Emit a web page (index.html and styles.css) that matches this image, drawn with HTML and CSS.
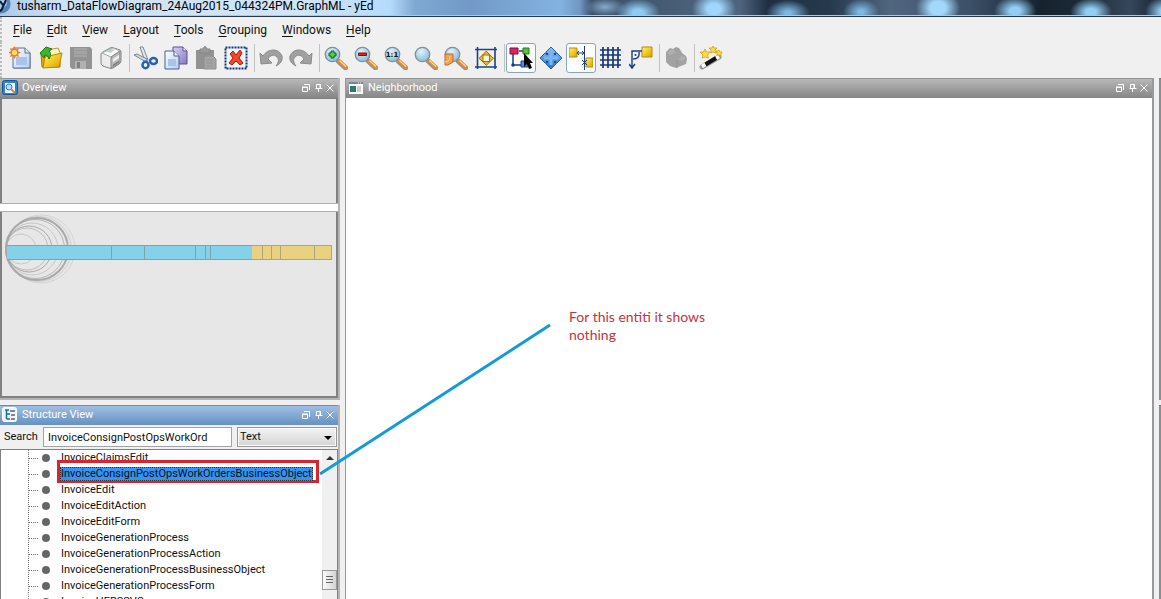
FILE: index.html
```html
<!DOCTYPE html>
<html lang="en">
<head>
<meta charset="utf-8">
<title>tusharm_DataFlowDiagram_24Aug2015_044324PM.GraphML - yEd</title>
<link rel="stylesheet" href="styles.css">
</head>
<body>
<svg class="defs" aria-hidden="true">
  <defs>
    <linearGradient id="g-yellow" x1="0" y1="0" x2="1" y2="1"><stop offset="0" stop-color="#fff08a"/><stop offset=".4" stop-color="#f8d22c"/><stop offset="1" stop-color="#d8a000"/></linearGradient>
    <linearGradient id="g-page" x1="0" y1="0" x2="1" y2="1"><stop offset="0" stop-color="#fff"/><stop offset="1" stop-color="#b4cdf2"/></linearGradient>
    <linearGradient id="g-purple" x1="0" y1="0" x2="1" y2="1"><stop offset="0" stop-color="#d9d2f5"/><stop offset="1" stop-color="#8577c4"/></linearGradient>
    <linearGradient id="g-blue" x1="0" y1="0" x2="0" y2="1"><stop offset="0" stop-color="#8cc4f8"/><stop offset="1" stop-color="#2a72c4"/></linearGradient>
    <radialGradient id="g-lens" cx=".4" cy=".3" r=".8"><stop offset="0" stop-color="#e2f3fb"/><stop offset="1" stop-color="#7fb4d4"/></radialGradient>
    <symbol id="lens" viewBox="0 0 24 24">
      <path d="M14.5 15.500l7 6.500" stroke="#9a938c" stroke-width="5" stroke-linecap="round"/>
      <path d="M15.500 15l6.500 6" stroke="#f08a24" stroke-width="3.500" stroke-linecap="round"/>
      <path d="M15.500 14.500l6.500 6" stroke="#ffd9a0" stroke-width="1.200"/>
      <circle cx="8.500" cy="8.500" r="7.200" fill="url(#g-lens)" stroke="#7e8e9a" stroke-width="1.300"/>
    </symbol>
    <symbol id="win-tools" viewBox="0 0 34 10">
      <g fill="none" stroke="#fff" stroke-width="1">
        <path d="M1.500 4.500h5v4h-5zM1 4h6M3 1.500h5.500v5.500"/>
        <path d="M14.500 5.500h7M15.500 5.500v-4h4v4M19 1.500v4M17.500 6v3"/>
        <path d="M25.500 1.500l7 7M32.500 1.500l-7 7"/>
      </g>
    </symbol>
  </defs>
</svg>

<header class="titlebar">
  <svg class="app-icon" viewBox="0 0 12 17" aria-hidden="true"><circle cx="1" cy="4" r="9.500" fill="#5686b8"/><circle cx="0" cy="2" r="7" fill="#a9c8e4"/><path d="M0 1l3 4M6 0l-4 9q-1 2-3 2" fill="none" stroke="#0b1c38" stroke-width="2"/></svg>
  <h1 class="title">tusharm_DataFlowDiagram_24Aug2015_044324PM.GraphML - yEd</h1>
</header>

<nav class="menubar" aria-label="Main menu">
  <button class="menu"><u>F</u>ile</button>
  <button class="menu"><u>E</u>dit</button>
  <button class="menu"><u>V</u>iew</button>
  <button class="menu"><u>L</u>ayout</button>
  <button class="menu"><u>T</u>ools</button>
  <button class="menu"><u>G</u>rouping</button>
  <button class="menu"><u>W</u>indows</button>
  <button class="menu"><u>H</u>elp</button>
</nav>

<div class="toolbar" role="toolbar" aria-label="Tools">
  <button class="tool" aria-label="New"><svg viewBox="0 0 24 24"><path d="M5 3h13l4 4v16H5z" fill="#777" opacity=".5"/><path d="M4 2h12l5 5v15H4z" fill="url(#g-page)" stroke="#58719c"/><path d="M16 2v5h5" fill="#dce8fa" stroke="#58719c"/><path d="M7 11h11v8H7z" fill="#a9c3ea"/><path d="M5.500 0l1.500 3 3-1-1 3 3 1.500-3 1.500 1 3-3-1-1.500 3-1.500-3-3 1 1-3-3-1.500 3-1.500-1-3 3 1z" fill="#f87838"/><circle cx="5.500" cy="6.500" r="2.600" fill="#ffe45a"/></svg></button>
  <button class="tool" aria-label="Open"><svg viewBox="0 0 24 24"><path d="M2 8l8-2 2 2h9v13H3z" fill="#d8a800" stroke="#a07c10"/><path d="M9 4l10-2 2 5v12L9 20z" fill="#fff8c0" stroke="#b59a30"/><path d="M6 11l17-4-3 14-16 1z" fill="url(#g-yellow)" stroke="#b18c10"/><path d="M1 7l6-6 6 2-3 2c2 2 2 5 0 8-1-3-2-4-4-4l-1 3z" fill="#3fb52d" stroke="#1c7a17"/></svg></button>
  <button class="tool" aria-label="Save" disabled><svg viewBox="0 0 24 24"><path d="M1 1h20l2 2v20H3l-2-2z" fill="#939393"/><path d="M5 2h13v9H5z" fill="#a4a4a4"/><path d="M6 15h11v8H6z" fill="#b2b2b2"/><path d="M8 16h3v6H8z" fill="#808080"/><path d="M5 4.500h13M5 8.500h13" stroke="#999"/></svg></button>
  <button class="tool" aria-label="Print"><svg viewBox="0 0 24 24"><path d="M2 8q0-1 2-2l7-4q2-1 4 0l6 2q1 1 1 2v9q0 2-2 3l-6 4q-2 1-4 0l-6-2q-2-1-2-3z" fill="#ececec" stroke="#868686"/><path d="M3 7l9 4 9-6-7-3z" fill="#fcfcfc" stroke="#aaa"/><path d="M12 11v11l9-5V5z" fill="#b9b9b9" stroke="#888"/><path d="M14 13l6-4v3l-6 4z" fill="#f4f4f4"/><path d="M14 19.500l6-4" stroke="#777" stroke-width="1.500"/><path d="M7 5l5-2 4 1-5 3z" fill="#bdd0c8"/></svg></button>
  <span class="sep"></span>
  <button class="tool" aria-label="Cut"><svg viewBox="0 0 24 24"><path d="M6 1l3 0 5 13-3 1z" fill="#e5e8ec" stroke="#7c8894"/><path d="M0 9l3-1 10 5-1 3z" fill="#d3d8dd" stroke="#7c8894"/><ellipse cx="11.500" cy="19" rx="3" ry="3.200" fill="none" stroke="#2162b4" stroke-width="2.500"/><ellipse cx="19.500" cy="15" rx="3.500" ry="3" fill="none" stroke="#2162b4" stroke-width="2.500"/></svg></button>
  <button class="tool" aria-label="Copy"><svg viewBox="0 0 24 24"><path d="M9 1h10l4 4v13H9z" fill="url(#g-purple)" stroke="#60519a"/><path d="M19 1v4h4" fill="#eee" stroke="#60519a"/><path d="M1 5h9l5 5v13H1z" fill="url(#g-page)" stroke="#436092"/><path d="M10 5v5h5" fill="#e9f2ff" stroke="#436092"/><path d="M4 13h8v7H4z" fill="#a8c4ea"/></svg></button>
  <button class="tool" aria-label="Paste" disabled><svg viewBox="0 0 24 24"><path d="M2 4h18v19H2z" fill="#929292"/><path d="M6 3h3q2-5 4 0h3v4H6z" fill="#999" stroke="#858585"/><path d="M10 10h9l3 3v10H10z" fill="#a4a4a4" stroke="#8e8e8e"/><path d="M12 14h7M12 17h7M12 20h7" stroke="#969696"/></svg></button>
  <button class="tool" aria-label="Delete"><svg viewBox="0 0 24 24"><path d="M1.500 1.500h21v21h-21z" fill="#f1f5fc" stroke="#143778" stroke-width="2" stroke-dasharray="2 1"/><path d="M6 8l3-3 3 4 4-5 2 3-3 5 4 5-3 2-4-4-4 4-3-2 4-5z" fill="#f04728" stroke="#a91c0c"/></svg></button>
  <span class="sep"></span>
  <button class="tool" aria-label="Undo" disabled><svg viewBox="0 0 24 24"><path d="M1 7l3 3C9 2 20 2 23 10c1 5-2 8-6 10 3-4 3-7 1-9-3-3-7-2-9 2l4 4-11 1z" fill="#a0a0a0" stroke="#8b8b8b"/></svg></button>
  <button class="tool" aria-label="Redo" disabled><svg viewBox="0 0 24 24"><path d="M23 7l-3 3C15 2 4 2 1 10c-1 5 2 8 6 10-3-4-3-7-1-9 3-3 7-2 9 2l-4 4 11 1z" fill="#a0a0a0" stroke="#8b8b8b"/></svg></button>
  <span class="sep"></span>
  <button class="tool" aria-label="Zoom in"><svg viewBox="0 0 24 24"><use href="#lens"/><path d="M7 5h3v2h2v3h-2v2H7v-2H5V7h2z" fill="#4bd044" stroke="#0c6410"/></svg></button>
  <button class="tool" aria-label="Zoom out"><svg viewBox="0 0 24 24"><use href="#lens"/><path d="M4.500 7h8v2.500h-8z" fill="#e32222" stroke="#82100f"/></svg></button>
  <button class="tool" aria-label="Zoom 1:1"><svg viewBox="0 0 24 24"><use href="#lens"/><text x="8" y="11" class="ratio">1:1</text></svg></button>
  <button class="tool" aria-label="Zoom"><svg viewBox="0 0 24 24"><use href="#lens"/></svg></button>
  <button class="tool" aria-label="Zoom to area"><svg viewBox="0 0 24 24"><use href="#lens"/><path d="M1 8h8v8l-5 3H1z" fill="#f3a25c" stroke="#c46a20"/><path d="M1 16q5 0 5-6" fill="none" stroke="#ffd5a8"/></svg></button>
  <button class="tool" aria-label="Fit content"><svg viewBox="0 0 24 24"><path d="M3.500 1v22M21 1v22M1 3.500h22M1 21h22" stroke="#1d4386" stroke-width="1.600"/><circle cx="12.300" cy="12.300" r="5.500" fill="none" stroke="#e8d48a"/><path d="M12.300 5l3.500 4h-7zM12.300 19.500l3.500-4h-7zM5 12.300l4-3.500v7zM19.500 12.300l-4-3.500v7z" fill="#f4bc18" stroke="#9a7408"/></svg></button>
  <span class="sep"></span>
  <button class="tool pressed" aria-label="Edit mode" aria-pressed="true"><svg viewBox="0 0 24 24"><path d="M4 8v11h8M10 5h6" stroke="#173f80" stroke-width="1.500" fill="none"/><path d="M1 2h8v6H1z" fill="#de2460" stroke="#7a1038"/><path d="M14 2h6v6h-6z" fill="#59c433" stroke="#297414"/><circle cx="4" cy="19" r="1.800" fill="#173f80"/><path d="M12 15h7v6h-7z" fill="#4d8fdd" stroke="#1d4386"/><path d="M15 7v14l3-3 2 5 3-1-2-5h3z" fill="#000"/></svg></button>
  <button class="tool" aria-label="Navigation mode"><svg viewBox="0 0 24 24"><path d="M12 1l5 5v1h1l5 5-5 5h-1v1l-5 5-5-5v-1H6l-5-5 5-5h1V6z" fill="url(#g-blue)" stroke="#2461a6"/><path d="M12 5v14M5 12h14" stroke="#7ab6ee" stroke-width="3"/><path d="M7 7h2v2H7zM15 7h2v2h-2zM7 15h2v2H7zM15 15h2v2h-2z" fill="#174e92"/></svg></button>
  <button class="tool pressed" aria-label="Snapping" aria-pressed="true"><svg viewBox="0 0 24 24"><path d="M0 2h8v9H0z" fill="url(#g-yellow)" stroke="#b18c10"/><path d="M17 12h7v9h-7z" fill="url(#g-yellow)" stroke="#b18c10"/><path d="M15.500 0v24M8 7h7M8 7l2-2M8 7l2 2M15 7l-2-2M15 7l-2 2M13 14l5 5M18 14l-5 5" stroke="#1d3f78" fill="none"/></svg></button>
  <button class="tool" aria-label="Grid"><svg viewBox="0 0 24 24"><path d="M4 1v21M9 1v21M14 1v21M19 1v21M1 4h21M1 9h21M1 14h21M1 19h21" stroke="#16387c" stroke-width="1.700"/></svg></button>
  <button class="tool" aria-label="Orthogonal edges"><svg viewBox="0 0 24 24"><path d="M13 1h10v10H13z" fill="url(#g-yellow)" stroke="#b18c10"/><path d="M13 5H3v17M0 18l3 4 3-4M4 13q7 0 6-7" fill="none" stroke="#173f80" stroke-width="1.400"/><circle cx="6.500" cy="9" r="1" fill="#173f80"/></svg></button>
  <span class="sep"></span>
  <button class="tool" aria-label="Component" disabled><svg viewBox="0 0 24 24"><path d="M2 6l4-4 3 1 3-2 3 1 2 3 1 2 4 3 1 3-1 5-5 2-5 2-6-2-4-4z" fill="#a2a2a2"/><path d="M3 7l5-4 4 3-6 3zM14 13l4-3 4 2-4 3z" fill="#b0b0b0"/><path d="M13 14v8" stroke="#909090"/></svg></button>
  <span class="sep"></span>
  <button class="tool" aria-label="Wizard"><svg viewBox="0 0 24 24"><path d="M3 21L20 11" stroke="#999" stroke-width="5" stroke-linecap="round"/><path d="M3 20.500l4-2.500M17 12.500l3-2" stroke="#fff" stroke-width="3.500"/><path d="M6.500 18.500l10.500-6.500" stroke="#111" stroke-width="4"/><path d="M6 3l1.500 3 4 0-3 3 1 3-3.500-1-3 1 1-3-3-3 3.500 0zM14 0l1 2 3 0-2 2 1 3-3-1-2 1 0-3-2-2 3 0zM20 4l1 2 2 0-1 2 0 2-2-1-2 0 0-2-1-2 2 0z" fill="#ffdc3c" stroke="#c99a10" stroke-width=".7"/></svg></button>
</div>

<main class="workspace">
  <div class="sidebar">
    <section class="panel overview">
      <div class="panel-head">
        <svg class="head-icon" viewBox="0 0 16 16"><rect x=".5" y=".5" width="15" height="14" rx="2" fill="#2e82ce" stroke="#14589c"/><path d="M3 3h10v10H3z" fill="#f0f6fc"/><circle cx="7" cy="7" r="3" fill="#b9dcf3" stroke="#427ca8"/><path d="M9 9l4 4" stroke="#d48834" stroke-width="2"/></svg>
        <h2>Overview</h2>
        <button class="win" aria-label="Overview window controls"><svg viewBox="0 0 34 10"><use href="#win-tools"/></svg></button>
      </div>
      <div class="overview-body">
        <div class="view-above"></div>
        <div class="view-strip"></div>
        <div class="view-graph">
          <svg viewBox="0 0 334 80" aria-label="Graph overview">
            <g fill="none" stroke="#777" opacity=".55">
              <circle cx="37" cy="37" r="32.500" opacity=".4"/><circle cx="39" cy="37" r="34" opacity=".3"/><circle cx="35" cy="37" r="31" stroke-width="2"/><circle cx="33" cy="37" r="29.500" opacity=".8"/>
              <circle cx="30" cy="37" r="26" opacity=".5"/><circle cx="27" cy="37" r="23"/><circle cx="25" cy="37" r="21" opacity=".7"/><circle cx="19" cy="37" r="15" opacity=".5"/>
            </g>
            <path d="M5 33h245v15H5z" fill="#83d2e7"/><path d="M250 33h80v15h-80z" fill="#e8d27f"/>
            <path d="M5 33.500h325M5 47.500h325M109.500 33v15M142.500 33v15M193.500 33v15M203.500 33v15M208.500 33v15M260.500 33v15M269.500 33v15M278.500 33v15M312.500 33v15M329.500 33v15" stroke="#777" opacity=".5"/>
          </svg>
        </div>
      </div>
    </section>

    <section class="panel structure">
      <div class="panel-head active">
        <svg class="head-icon" viewBox="0 0 16 16"><rect x=".5" y=".5" width="14" height="14" rx="2" fill="#eef5fc" stroke="#fff"/><path d="M3 3h4M4.500 3v9M4.500 7H8M4.500 12H8" stroke="#2067a8" stroke-width="1.500" fill="none"/><path d="M8 4h5M9 8h4M9 12h4" stroke="#7f8890" stroke-width="2"/></svg>
        <h2>Structure View</h2>
        <button class="win" aria-label="Structure View window controls"><svg viewBox="0 0 34 10"><use href="#win-tools"/></svg></button>
      </div>
      <form class="search">
        <label for="q">Search</label>
        <input id="q" type="text" value="InvoiceConsignPostOpsWorkOrd">
        <span class="combo"><select aria-label="Search in"><option>Text</option></select></span>
      </form>
      <div class="tree-wrap">
        <ul class="tree">
          <li><i class="dot"></i><span>InvoiceClaimsEdit</span></li>
          <li class="marked"><i class="dot"></i><span class="selected">InvoiceConsignPostOpsWorkOrdersBusinessObject</span></li>
          <li><i class="dot"></i><span>InvoiceEdit</span></li>
          <li><i class="dot"></i><span>InvoiceEditAction</span></li>
          <li><i class="dot"></i><span>InvoiceEditForm</span></li>
          <li><i class="dot"></i><span>InvoiceGenerationProcess</span></li>
          <li><i class="dot"></i><span>InvoiceGenerationProcessAction</span></li>
          <li><i class="dot"></i><span>InvoiceGenerationProcessBusinessObject</span></li>
          <li><i class="dot"></i><span>InvoiceGenerationProcessForm</span></li>
          <li><i class="dot"></i><span>InvoiceHERSSVC</span></li>
        </ul>
        <div class="scrollbar"><i class="up"></i><i class="thumb"></i></div>
      </div>
    </section>
  </div>

  <section class="panel neighborhood">
    <div class="panel-head">
      <svg class="head-icon" viewBox="0 0 16 16"><path d="M1 2h14v12H1z" fill="#fff"/><path d="M1 2h14v2H1z" fill="#6f8796"/><path d="M2 6h6v6H2z" fill="#2f7a74"/><path d="M9 7h4M9 9h4M9 11h4" stroke="#999"/><path d="M10 3h1M12 3h1" stroke="#fff"/></svg>
      <h2>Neighborhood</h2>
      <button class="win" aria-label="Neighborhood window controls"><svg viewBox="0 0 34 10"><use href="#win-tools"/></svg></button>
    </div>
    <div class="canvas"></div>
  </section>

  <div class="edge"><div class="edge-top"></div><div class="edge-bottom"></div></div>

  <svg class="pointer" viewBox="0 0 234 154" aria-hidden="true"><path d="M2 151L232 2" stroke="#149bd7" stroke-width="3"/></svg>
  <p class="note">For this entiti it shows<br>nothing</p>
</main>
</body>
</html>
```
FILE: styles.css
```css
*, *::before, *::after { box-sizing: border-box; }
html, body { height: 100%; }
body {
  margin: 0;
  display: flex;
  flex-direction: column;
  overflow: hidden;
  background: #f0f0f0;
  color: #111;
  font: 11px/16px Roboto, "Noto Sans", sans-serif;
}
button, input, select { font: inherit; color: inherit; }
button { padding: 0; border: 0; background: none; }
.defs { position: absolute; width: 0; height: 0; }

/* Title bar: translucent glass over a bokeh desktop */
.titlebar {
  flex: none;
  display: flex;
  height: 17px;
  gap: 5px;
  border-bottom: 1px solid #28394b;
  box-shadow: inset 0 -1px #b5c6d4;
  background:
    radial-gradient(ellipse 20px 9px at 605px 7px, #86a9cb, transparent),
    radial-gradient(ellipse 22px 14px at 638px 13px, #8fcaf2 25%, transparent),
    radial-gradient(ellipse 22px 18px at 714px 9px, #9fd6fc 30%, transparent),
    radial-gradient(ellipse 22px 13px at 788px 13px, #7db8e0 15%, transparent),
    radial-gradient(ellipse 18px 13px at 861px 12px, #7db8e0 15%, transparent),
    radial-gradient(ellipse 22px 19px at 938px 8px, #a2d8fc 35%, transparent),
    radial-gradient(ellipse 21px 15px at 1015px 11px, #90cef4 25%, transparent),
    radial-gradient(ellipse 21px 14px at 1091px 12px, #90cef4 25%, transparent),
    radial-gradient(ellipse 20px 16px at 1165px 12px, #90cef4 25%, transparent),
    linear-gradient(90deg, #a9c9e8 0, #cfe2f4 60px, #d2e5f6 300px, #b5dbfc 390px, #7fa8d2 415px, #7299c8 470px, #83b3e0 560px, #6f97c2 580px, #3b5169 592px, #4a6078 690px, #4f647e 740px, #1f2f42 768px, #26394d 830px, #50657f 890px, #3c5068 970px, #16232f 1040px, #1b2936 1080px, #36475c 1130px, #16232f 1161px);
}
.app-icon { flex: none; width: 12px; height: 17px; }
.title { margin: 0; font: 12px/13px Roboto, sans-serif; color: #000; white-space: nowrap; }

.menubar { flex: none; display: flex; align-items: center; height: 25px; padding-left: 3px; border-left: 2px dotted #bbb; }
.menu { padding: 0 8px; margin-right: -1px; font: 12px/18px Roboto, sans-serif; }
.menu u { text-underline-offset: 2px; }

.toolbar { flex: none; display: flex; align-items: center; height: 36px; padding: 0 0 4px 4px; border-left: 2px dotted #bbb; }
.tool { display: flex; align-items: center; justify-content: center; flex: none; width: 30px; height: 30px; }
.tool svg { width: 24px; height: 24px; }
.tool.pressed { border: 1px solid #8aa4b8; border-radius: 3px; background: #fafcfe; }
.ratio { font: bold 7px "DejaVu Sans", sans-serif; text-anchor: middle; fill: #111; }
.sep { flex: none; width: 1px; height: 28px; margin: 0 1px 0 3px; background: #c2c2c2; }

.workspace { position: relative; flex: 1; min-height: 0; display: grid; grid-template-columns: 340px minmax(0, 1fr) 2px; column-gap: 5px; }
.sidebar { display: grid; grid-template-rows: 322px minmax(0, 1fr); row-gap: 5px; min-height: 0; }
.panel { display: flex; flex-direction: column; min-width: 0; min-height: 0; }

.panel-head {
  flex: none;
  display: flex;
  align-items: center;
  gap: 4px;
  height: 20px;
  padding: 0 3px 1px 2px;
  border-top: 1px solid #929292;
  background: linear-gradient(#b8b8b8, #858585);
  color: #fff;
}
.panel-head.active { border-top-color: #6b8db5; background: linear-gradient(#9fc0e3, #6690c0); }
.panel-head h2 { flex: 1; margin: 0; font: inherit; }
.head-icon { flex: none; width: 16px; height: 16px; }
.win { display: flex; }
.win svg { width: 34px; height: 10px; }

.overview { border-right: 2px solid #b4b4b4; border-bottom: 2px solid #b4b4b4; }
.overview-body { flex: 1; display: flex; flex-direction: column; border: 2px solid #808080; border-top-width: 1px; background: #e7e7e7; }
.view-above { height: 104px; }
.view-strip { height: 9px; margin: 0 -2px; border: 1px solid #b0b0b0; border-width: 1px 0; background: #fff; }
.view-graph { flex: 1; }
.view-graph svg { display: block; width: 100%; height: auto; }

.structure { border-right: 2px solid #b4b4b4; }
.search { flex: none; display: flex; align-items: center; gap: 5px; height: 24px; margin: 0; padding: 0 1px 0 4px; }
.search label { width: 34px; white-space: nowrap; }
.search input { flex: 1; min-width: 0; height: 20px; padding: 0 4px; border: 1px solid #a0a4a8; background: #fff; }
.combo { position: relative; display: flex; width: 100px; height: 20px; }
.combo select { width: 100%; padding: 0 2px; border: 1px solid #989898; border-radius: 0; appearance: none; background: linear-gradient(#f4f4f4, #d4d4d4); box-shadow: inset 0 0 0 1px #fafafa; }
.combo::after { content: ""; position: absolute; right: 5px; top: 9px; border: 4px solid transparent; border-top-color: #000; border-bottom: 0; }

.tree-wrap { flex: 1; min-height: 0; display: flex; overflow: hidden; border: 1px solid #808080; border-bottom: 0; background: #fff; }
.tree { flex: 1; min-width: 0; margin: 0 0 0 27px; padding: 0; list-style: none; border-left: 1px dotted #777; }
.tree li { position: relative; display: flex; align-items: center; height: 16px; white-space: nowrap; }
.tree li::before { content: ""; width: 9px; margin-right: 4px; border-top: 1px dotted #777; }
.tree span { padding: 0 1px; }
.dot { width: 8px; height: 8px; margin-right: 10px; border-radius: 50%; background: #666; }
.tree .marked { z-index: 1; }
.marked::after { content: ""; position: absolute; z-index: -1; left: 28px; top: -6px; width: 262px; height: 23px; border: 3px solid #d9232e; background: #fff; }
.selected { line-height: 14px; background: #3093f5; outline: 1px dotted #333; outline-offset: -1px; }
.scrollbar { flex: none; display: flex; flex-direction: column; align-items: center; justify-content: space-between; width: 15px; padding: 6px 0 9px; background: #f0f0f0; }
.up { border: 4px solid transparent; border-bottom-color: #333; border-top: 0; }
.thumb { width: 15px; height: 20px; border: 1px solid #999; background: linear-gradient(#666, #666) 3px 5px/7px 1px no-repeat, linear-gradient(#666, #666) 3px 8px/7px 1px no-repeat, linear-gradient(#666, #666) 3px 11px/7px 1px no-repeat, linear-gradient(90deg, #fafafa, #d4d4d4); }

.neighborhood { border: 1px solid #999; border-width: 0 2px 0 1px; }
.canvas { flex: 1; background: #fff; }
.edge { display: grid; grid-template-rows: 322px 1fr; row-gap: 5px; }
.edge-top, .edge-bottom { background: #8a8d94; border-top: 1px solid #777; }

/* Callout over the panels */
.pointer { position: absolute; z-index: 2; left: 318px; top: 245px; width: 234px; height: 154px; }
.note { position: absolute; left: 569px; top: 230px; margin: 0; font: 14px/18px Lato, sans-serif; color: #c8323a; }
```
